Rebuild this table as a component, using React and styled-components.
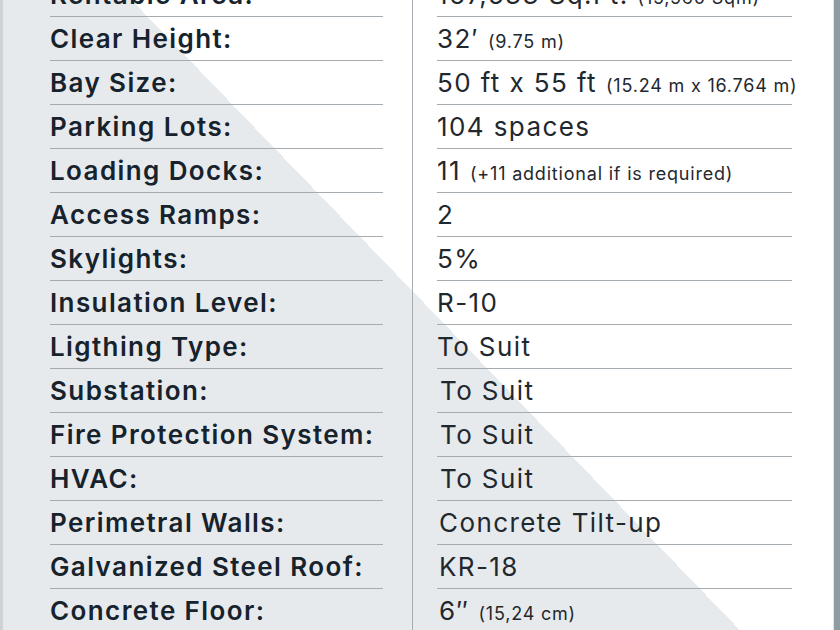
import styled, { createGlobalStyle } from "styled-components";

const specs = [
  { label: "Rentable Area:", value: "167,533 Sq.Ft.", note: "(15,560 Sqm)" },
  { label: "Clear Height:", value: "32′", note: "(9.75 m)" },
  { label: "Bay Size:", value: "50 ft x 55 ft", note: "(15.24 m x 16.764 m)" },
  { label: "Parking Lots:", value: "104 spaces" },
  { label: "Loading Docks:", value: "11", note: "(+11 additional if is required)" },
  { label: "Access Ramps:", value: "2" },
  { label: "Skylights:", value: "5%" },
  { label: "Insulation Level:", value: "R-10" },
  { label: "Ligthing Type:", value: "To Suit" },
  { label: "Substation:", value: "To Suit", shift: 3 },
  { label: "Fire Protection System:", value: "To Suit", shift: 3 },
  { label: "HVAC:", value: "To Suit", shift: 3 },
  { label: "Perimetral Walls:", value: "Concrete Tilt-up", shift: 2 },
  { label: "Galvanized Steel Roof:", value: "KR-18", shift: 2 },
  { label: "Concrete Floor:", value: "6″", note: "(15,24 cm)", shift: 2 },
];

const App = () => {
  return (
    <>
      <GlobalStyle />
      <Sheet>
        <LeftEdge />
        <Panel>
          <Table>
            {specs.map((s) => (
              <Row key={s.label}>
                <Label>{s.label}</Label>
                <ValueCol>
                  <Value $shift={s.shift || 0}>
                    {s.value}
                    {s.note && <Note>{s.note}</Note>}
                  </Value>
                </ValueCol>
              </Row>
            ))}
          </Table>
        </Panel>
        <RightEdge />
      </Sheet>
    </>
  );
};

const GlobalStyle = createGlobalStyle`
  html, body {
    margin: 0;
    padding: 0;
    background: #fff;
    overflow: hidden;
  }
  body {
    font-family: Inter, "Liberation Sans", sans-serif;
  }
`;

const Sheet = styled.div`
  display: flex;
  width: 840px;
  height: 630px;
  overflow: hidden;
`;

const LeftEdge = styled.div`
  flex: 0 0 3px;
  background: #cfd3d7;
`;

const RightEdge = styled.div`
  flex: 0 0 6px;
  background: #8e9ca3;
  border-left: 1px solid #dfe4e6;
`;

const Panel = styled.div`
  flex: 1;
  min-width: 0;
  overflow: hidden;
  background: linear-gradient(46deg, #e7eaed 530px, #ffffff 530px);
`;

const Table = styled.div`
  display: flex;
  flex-direction: column;
  margin-top: -27px;
  padding-left: 47px;
`;

const Row = styled.div`
  display: grid;
  grid-template-columns: 333px 1fr;
  height: 44px;
`;

const Label = styled.div`
  box-sizing: border-box;
  height: 44px;
  padding-top: 9px;
  border-bottom: 1.5px solid #a4acb1;
  font-size: 26px;
  line-height: 26px;
  font-weight: 600;
  letter-spacing: 1.4px;
  color: #16222c;
  white-space: nowrap;
`;

const ValueCol = styled.div`
  margin-left: 29px;
  padding-left: 24px;
  border-left: 1.5px solid #a7adb2;
`;

const Value = styled.div`
  box-sizing: border-box;
  width: 355px;
  height: 44px;
  padding-top: 9px;
  padding-left: ${(p) => p.$shift}px;
  border-bottom: 1.5px solid #a4acb1;
  font-size: 26px;
  line-height: 26px;
  font-weight: 400;
  letter-spacing: 1.4px;
  color: #1f282e;
  white-space: nowrap;
`;

const Note = styled.span`
  margin-left: 9px;
  font-size: 18px;
  letter-spacing: 0.8px;
`;

export default App;
